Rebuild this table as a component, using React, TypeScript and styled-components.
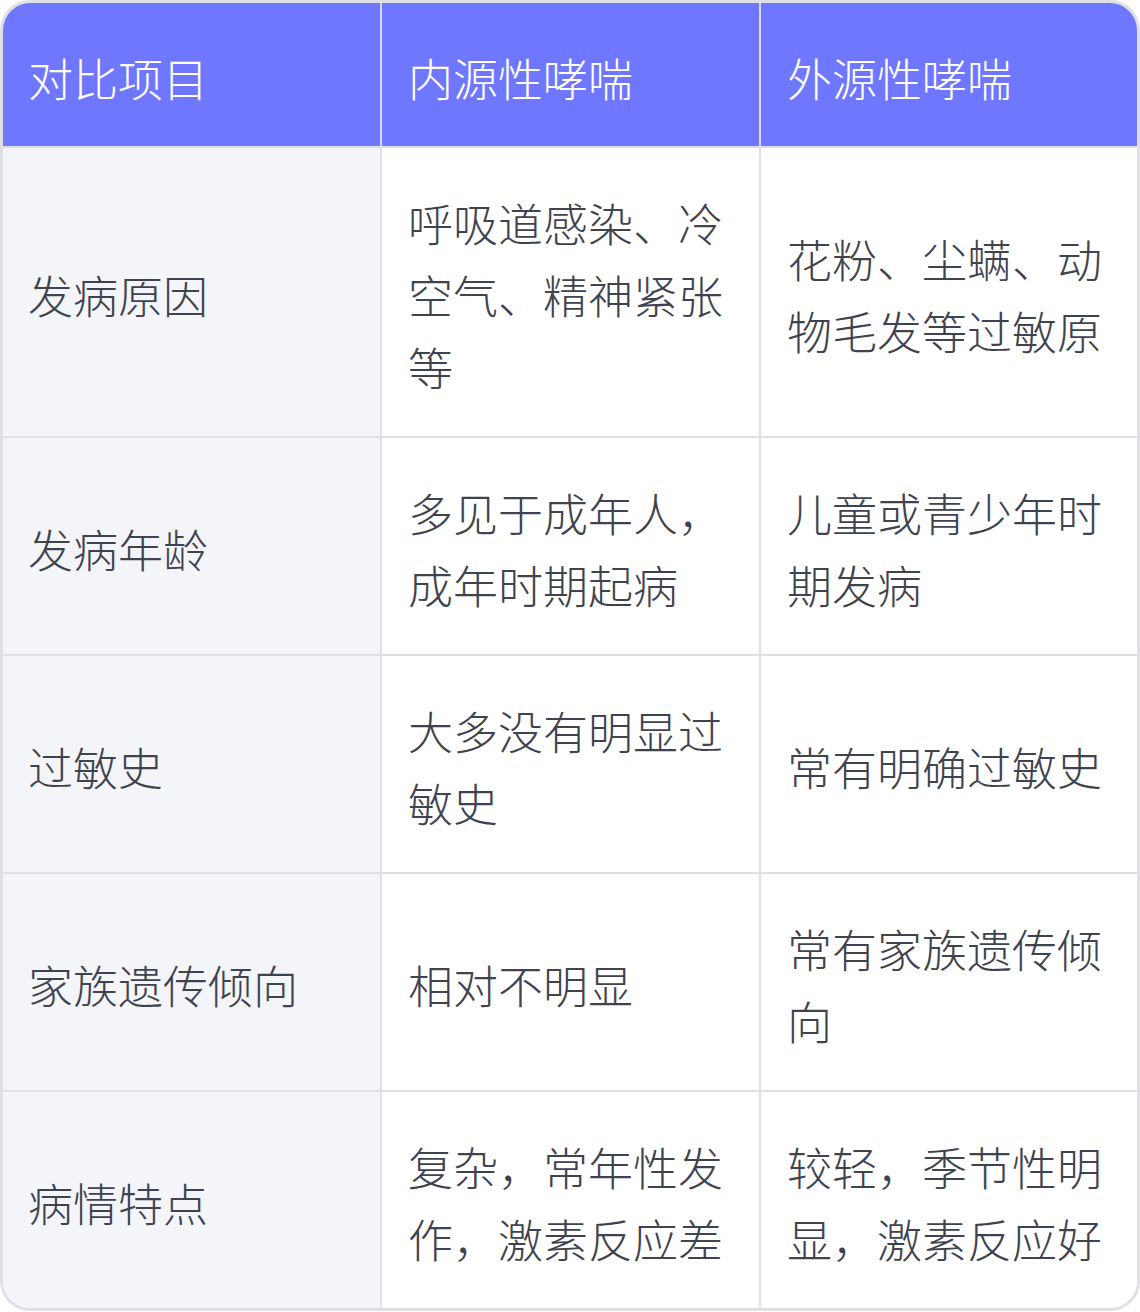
import React from "react";
import styled, { createGlobalStyle } from "styled-components";

interface Row {
  item: string;
  intrinsic: string;
  extrinsic: string;
}

const rows: Row[] = [
  {
    item: "发病原因",
    intrinsic: "呼吸道感染、冷空气、精神紧张等",
    extrinsic: "花粉、尘螨、动物毛发等过敏原",
  },
  {
    item: "发病年龄",
    intrinsic: "多见于成年人，成年时期起病",
    extrinsic: "儿童或青少年时期发病",
  },
  {
    item: "过敏史",
    intrinsic: "大多没有明显过敏史",
    extrinsic: "常有明确过敏史",
  },
  {
    item: "家族遗传倾向",
    intrinsic: "相对不明显",
    extrinsic: "常有家族遗传倾向",
  },
  {
    item: "病情特点",
    intrinsic: "复杂，常年性发作，激素反应差",
    extrinsic: "较轻，季节性明显，激素反应好",
  },
];

const GlobalStyle = createGlobalStyle`
  html, body {
    margin: 0;
    padding: 0;
    background: #ffffff;
  }
  body {
    font-family: "Noto Sans CJK SC", "Noto Sans", sans-serif;
  }
`;

const Frame = styled.div`
  width: 1140px;
  box-sizing: border-box;
  border: 3px solid #dfe0e5;
  border-radius: 30px;
  overflow: hidden;
`;

const Table = styled.table`
  width: 100%;
  border-collapse: collapse;
  table-layout: fixed;
`;

const HeadCell = styled.th`
  background: #7077ff;
  color: #ffffff;
  font-size: 45px;
  font-weight: 300;
  line-height: 72px;
  text-align: left;
  padding: 39px 26px 32px 26px;
  border-left: 2px solid #d9dbf2;
  border-bottom: 2px solid #dfe0e5;

  &:first-child {
    border-left: none;
    padding-left: 25px;
  }
`;

const Cell = styled.td<{ $label?: boolean }>`
  background: ${(p) => (p.$label ? "#f4f5f9" : "#ffffff")};
  color: #3f4350;
  font-size: 45px;
  font-weight: 300;
  line-height: 72px;
  vertical-align: middle;
  padding: 39px 26px 33px 26px;
  border-left: 2px solid #dfe0e5;
  border-top: 2px solid #dfe0e5;
  word-break: break-all;

  &:first-child {
    border-left: none;
    padding-left: 25px;
  }
`;

const BodyRow = styled.tr`
  &:first-child td {
    border-top: none;
  }
`;

const App: React.FC = () => {
  return (
    <>
      <GlobalStyle />
      <Frame>
        <Table>
          <colgroup>
            <col style={{ width: 378 }} />
            <col style={{ width: 379 }} />
            <col style={{ width: 377 }} />
          </colgroup>
          <thead>
            <tr>
              <HeadCell>对比项目</HeadCell>
              <HeadCell>内源性哮喘</HeadCell>
              <HeadCell>外源性哮喘</HeadCell>
            </tr>
          </thead>
          <tbody>
            {rows.map((r) => (
              <BodyRow key={r.item}>
                <Cell $label>{r.item}</Cell>
                <Cell>{r.intrinsic}</Cell>
                <Cell>{r.extrinsic}</Cell>
              </BodyRow>
            ))}
          </tbody>
        </Table>
      </Frame>
    </>
  );
};

export default App;
